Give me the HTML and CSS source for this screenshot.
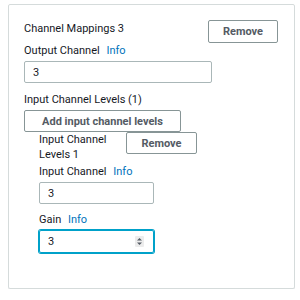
FILE: index.html
```html
<!DOCTYPE html>
<html lang="en">
<head>
    <meta charset="UTF-8">
    <title>Channel Mappings</title>
    <link rel="stylesheet" href="styles.css">
</head>
<body>

    <!-- Channel mapping panel -->
    <div class="panel">
        <div class="panel-header">
            <span class="panel-title">Channel Mappings 3</span>
            <button class="button">Remove</button>
        </div>

        <div class="label">Output Channel <a class="info">Info</a></div>
        <input class="field" type="text" value="3">

        <div class="label levels-label">Input Channel Levels (1)</div>
        <button class="button add-button">Add input channel levels</button>

        <!-- Input channel level 1 -->
        <div class="level">
            <div class="level-header">
                <span class="level-title">Input Channel Levels 1</span>
                <button class="button">Remove</button>
            </div>
            <div class="label">Input Channel <a class="info">Info</a></div>
            <input class="field small" type="text" value="3">

            <div class="label gain-label">Gain <a class="info">Info</a></div>
            <div class="field small focused number-field">
                <input class="number-input" type="text" value="3">
                <svg class="spinner" width="9" height="11" viewBox="0 0 9 11">
                    <rect width="9" height="11" rx="1" fill="#ececec"/>
                    <path d="M4.5 2 L7 4.5 L2 4.5 Z" fill="#545b64"/>
                    <path d="M4.5 9 L7 6.5 L2 6.5 Z" fill="#545b64"/>
                </svg>
            </div>
        </div>
    </div>

</body>
</html>
```

FILE: styles.css
```css
body {
    font-family: Roboto, "Liberation Sans", sans-serif;
    font-size: 11px;
    color: #16191f;
    background-color: #fff;
    margin: 4px 5px 0 8px;
}
.panel {
    height: 283px;
    border: 1px solid #d5dbdb;
    border-radius: 2px;
    padding: 0 16px 0 15px;
    box-shadow: 0 1px 1px rgba(0, 22, 40, 0.15);
}
.panel-header {
    display: flex;
    justify-content: space-between;
    align-items: flex-start;
    padding-top: 15px;
}
.panel-title {
    line-height: 15px;
    padding-top: 1px;
}
.label {
    line-height: 15px;
}
.info {
    color: #0073bb;
    margin-left: 4px;
}
.button {
    font-family: inherit;
    font-size: 11px;
    font-weight: bold;
    color: #545b64;
    background-color: #fff;
    border: 1px solid #879596;
    border-radius: 2px;
    height: 23px;
    width: 70px;
    padding: 0;
    cursor: pointer;
}
.field {
    display: block;
    box-sizing: border-box;
    font-family: inherit;
    font-size: 11px;
    color: #16191f;
    width: 188px;
    height: 22px;
    margin-top: 3px;
    padding: 0 8px;
    border: 1px solid #aab7b8;
    border-radius: 2px;
}
.levels-label {
    margin-top: 9px;
}
.add-button {
    display: block;
    width: 157px;
    height: 22px;
    margin-top: 3px;
}
.level {
    padding-left: 15px;
}
.level-header {
    display: flex;
    align-items: flex-start;
    gap: 8px;
}
.level-title {
    width: 79px;
    line-height: 15px;
}
.level-header .button {
    width: 71px;
    height: 22px;
}
.level .label {
    margin-top: 2px;
}
.field.small {
    width: 115px;
}
.level .gain-label {
    margin-top: 8px;
}
.field.focused {
    height: 23px;
    margin-top: 3px;
    border-color: #00a1c9;
    box-shadow: 0 0 0 1px #00a1c9;
}
.number-field {
    display: flex;
    align-items: center;
    padding-right: 9px;
}
.number-input {
    flex: 1;
    min-width: 0;
    border: none;
    outline: none;
    padding: 0;
    font-family: inherit;
    font-size: 11px;
    color: #16191f;
}
```
